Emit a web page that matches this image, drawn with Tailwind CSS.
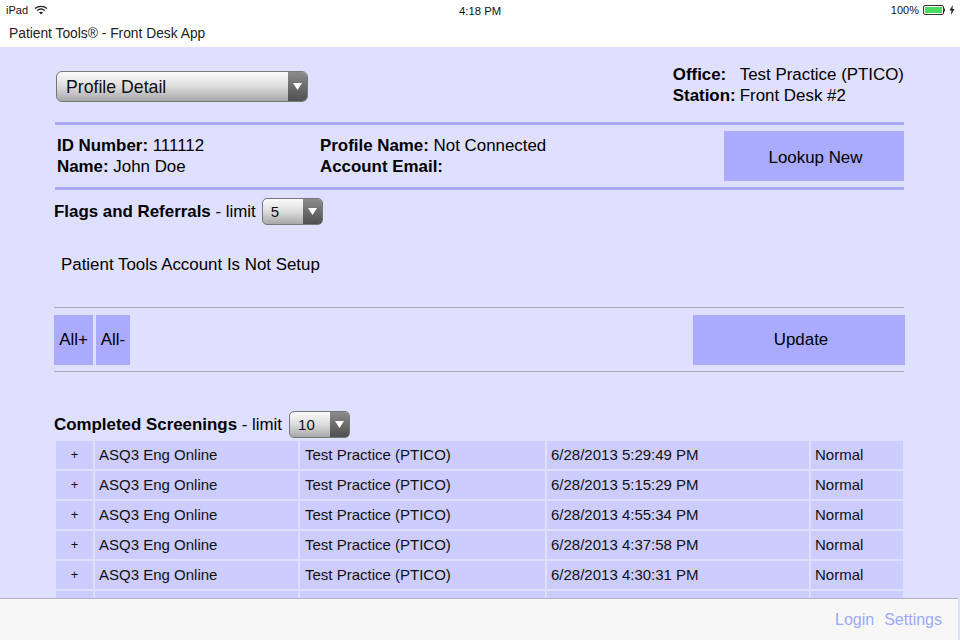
<!DOCTYPE html>
<html>
<head>
<meta charset="utf-8">
<script src="https://cdn.jsdelivr.net/npm/@tailwindcss/browser@4"></script>
</head>
<body class="m-0">
<div class="relative flex h-[640px] w-[960px] flex-col overflow-hidden bg-[#dfdfff] font-['Liberation_Sans',Arial,sans-serif] text-black">
  <!-- status bar -->
  <div class="relative flex h-[20px] shrink-0 items-center justify-between bg-white pl-[6px] pr-[5px] text-[11px] font-medium text-[#111]">
    <div class="flex items-center gap-[6px]">
      <span>iPad</span>
      <svg width="14" height="10" viewBox="0 0 14 10"><path d="M1 3.6C4.4.6 9.6.6 13 3.6" fill="none" stroke="#222" stroke-width="1.3"/><path d="M3.2 5.6c2.2-1.8 5.4-1.8 7.6 0" fill="none" stroke="#222" stroke-width="1.3"/><path d="M7 9.4 4.9 7.3c1.2-.9 3-.9 4.2 0z" fill="#222"/></svg>
    </div>
    <span class="absolute left-[459px] top-[3px] text-[11.3px]">4:18 PM</span>
    <div class="flex items-center">
      <span>100%</span>
      <svg class="ml-[4px]" width="22" height="10" viewBox="0 0 22 10"><rect x=".5" y=".5" width="20" height="9" rx="1.5" fill="#fff" stroke="#333"/><rect x="2" y="2" width="17" height="6" fill="#4cd964"/><rect x="21" y="3.5" width="1" height="3" fill="#333"/></svg>
      <svg class="ml-[4px]" width="6" height="10" viewBox="0 0 6 10"><path d="M3.8 0 .5 5.6h2L2 10l3.5-6h-2z" fill="#222"/></svg>
    </div>
  </div>
  <!-- title bar -->
  <div class="flex h-[27px] shrink-0 items-start bg-white pl-[9px] pt-[5px] text-[13.8px] leading-[18px] text-[#222]">Patient Tools® - Front Desk App</div>

  <!-- page content -->
  <div class="flex flex-col pl-[55px] pr-[56px]">
    <!-- top row -->
    <div class="flex h-[75px] items-start justify-between pl-px">
      <div class="mt-[24px] flex h-[31px] w-[252px] overflow-hidden rounded-[6px] border border-[#777] bg-gradient-to-b from-[#fbfbfb] via-[#dcdcdc] to-[#a8a8a8]">
        <span class="flex-1 pl-[9px] text-[17.7px] leading-[30px] text-[#111]">Profile Detail</span>
        <span class="flex w-[19px] items-center justify-center bg-gradient-to-b from-[#8c8c8c] to-[#505050]">
          <svg width="9" height="7" viewBox="0 0 9 7"><path d="M0 0h9L4.5 7z" fill="#fff"/></svg>
        </span>
      </div>
      <div class="mt-[17px] text-[16.9px] leading-[21px]">
        <div class="flex"><b class="w-[67px]">Office:</b><span>Test Practice (PTICO)</span></div>
        <div class="flex"><b class="w-[67px]">Station:</b><span>Front Desk #2</span></div>
      </div>
    </div>

    <!-- patient block -->
    <div class="flex h-[68px] items-start justify-between border-y-[3px] border-[#aaaaff] pl-[2px]">
      <div class="mt-[10px] flex text-[16.9px] leading-[21px]">
        <div class="w-[263px]">
          <div><b>ID Number:</b> 111112</div>
          <div><b>Name:</b> John Doe</div>
        </div>
        <div>
          <div><b>Profile Name:</b> Not Connected</div>
          <div><b>Account Email:</b></div>
        </div>
      </div>
      <div class="mt-[6px] flex h-[50px] w-[180px] items-center justify-center bg-[#aaaaff] pl-[3px] pt-[4px] text-[16.9px]">Lookup New</div>
    </div>

    <!-- flags -->
    <div class="-ml-px mt-[8px] flex h-[27px] items-center text-[16.9px]">
      <b>Flags and Referrals</b><span class="whitespace-pre"> - limit</span>
      <div class="ml-[6px] flex h-[27px] w-[61px] overflow-hidden rounded-[5px] border border-[#777] bg-gradient-to-b from-[#fbfbfb] via-[#dcdcdc] to-[#a8a8a8]">
        <span class="flex-1 pl-[8px] text-[15px] leading-[25px] text-[#111]">5</span>
        <span class="flex w-[19px] items-center justify-center bg-gradient-to-b from-[#8c8c8c] to-[#505050]">
          <svg width="9" height="7" viewBox="0 0 9 7"><path d="M0 0h9L4.5 7z" fill="#fff"/></svg>
        </span>
      </div>
    </div>
    <div class="mt-[29px] h-[35px] pl-[6px] text-[16.9px] leading-[22px]">Patient Tools Account Is Not Setup</div>

    <!-- action bar -->
    <div class="-ml-px mt-[18px] flex h-[65px] items-start justify-between border-y border-[#aaa] pt-[7px]">
      <div class="flex gap-[3px] text-[16.9px]">
        <div class="flex h-[50px] w-[39px] items-center justify-center bg-[#aaaaff]">All+</div>
        <div class="flex h-[50px] w-[34px] items-center justify-center bg-[#aaaaff]">All-</div>
      </div>
      <div class="-mr-px flex h-[50px] w-[212px] items-center justify-center bg-[#aaaaff] pl-[4px] text-[16.9px]">Update</div>
    </div>

    <!-- screenings -->
    <div class="-ml-px mt-[39px] flex h-[27px] items-center text-[16.9px]">
      <b>Completed Screenings</b><span class="whitespace-pre"> - limit</span>
      <div class="ml-[7px] flex h-[27px] w-[61px] overflow-hidden rounded-[5px] border border-[#777] bg-gradient-to-b from-[#fbfbfb] via-[#dcdcdc] to-[#a8a8a8]">
        <span class="flex-1 pl-[8px] text-[15px] leading-[25px] text-[#111]">10</span>
        <span class="flex w-[19px] items-center justify-center bg-gradient-to-b from-[#8c8c8c] to-[#505050]">
          <svg width="9" height="7" viewBox="0 0 9 7"><path d="M0 0h9L4.5 7z" fill="#fff"/></svg>
        </span>
      </div>
    </div>
    <div class="ml-px mt-[3px] grid w-[847px] grid-cols-[37px_203px_245px_262px_92px] gap-[2px] text-[15px] text-[#111]">
      <div class="flex h-[28px] items-center justify-center bg-[#ccccff] text-[13px]">+</div><div class="flex h-[28px] items-center bg-[#ccccff] pl-[4px]">ASQ3 Eng Online</div><div class="flex h-[28px] items-center bg-[#ccccff] pl-[5px]">Test Practice (PTICO)</div><div class="flex h-[28px] items-center bg-[#ccccff] pl-[4px]">6/28/2013 5:29:49 PM</div><div class="flex h-[28px] items-center bg-[#ccccff] pl-[4px]">Normal</div>
      <div class="flex h-[28px] items-center justify-center bg-[#ccccff] text-[13px]">+</div><div class="flex h-[28px] items-center bg-[#ccccff] pl-[4px]">ASQ3 Eng Online</div><div class="flex h-[28px] items-center bg-[#ccccff] pl-[5px]">Test Practice (PTICO)</div><div class="flex h-[28px] items-center bg-[#ccccff] pl-[4px]">6/28/2013 5:15:29 PM</div><div class="flex h-[28px] items-center bg-[#ccccff] pl-[4px]">Normal</div>
      <div class="flex h-[28px] items-center justify-center bg-[#ccccff] text-[13px]">+</div><div class="flex h-[28px] items-center bg-[#ccccff] pl-[4px]">ASQ3 Eng Online</div><div class="flex h-[28px] items-center bg-[#ccccff] pl-[5px]">Test Practice (PTICO)</div><div class="flex h-[28px] items-center bg-[#ccccff] pl-[4px]">6/28/2013 4:55:34 PM</div><div class="flex h-[28px] items-center bg-[#ccccff] pl-[4px]">Normal</div>
      <div class="flex h-[28px] items-center justify-center bg-[#ccccff] text-[13px]">+</div><div class="flex h-[28px] items-center bg-[#ccccff] pl-[4px]">ASQ3 Eng Online</div><div class="flex h-[28px] items-center bg-[#ccccff] pl-[5px]">Test Practice (PTICO)</div><div class="flex h-[28px] items-center bg-[#ccccff] pl-[4px]">6/28/2013 4:37:58 PM</div><div class="flex h-[28px] items-center bg-[#ccccff] pl-[4px]">Normal</div>
      <div class="flex h-[28px] items-center justify-center bg-[#ccccff] text-[13px]">+</div><div class="flex h-[28px] items-center bg-[#ccccff] pl-[4px]">ASQ3 Eng Online</div><div class="flex h-[28px] items-center bg-[#ccccff] pl-[5px]">Test Practice (PTICO)</div><div class="flex h-[28px] items-center bg-[#ccccff] pl-[4px]">6/28/2013 4:30:31 PM</div><div class="flex h-[28px] items-center bg-[#ccccff] pl-[4px]">Normal</div>
      <div class="h-[28px] bg-[#ccccff]"></div><div class="h-[28px] bg-[#ccccff]"></div><div class="h-[28px] bg-[#ccccff]"></div><div class="h-[28px] bg-[#ccccff]"></div><div class="h-[28px] bg-[#ccccff]"></div>
    </div>
  </div>

  <!-- footer overlay -->
  <div class="absolute bottom-0 left-0 flex h-[42px] w-[958px] items-center justify-end gap-[10px] border-t border-[#b0b0c8] bg-[#f7f7f7] pr-[16px] text-[16px] text-[#99aaff]">
    <span>Login</span><span>Settings</span>
  </div>
</div>
</body>
</html>
